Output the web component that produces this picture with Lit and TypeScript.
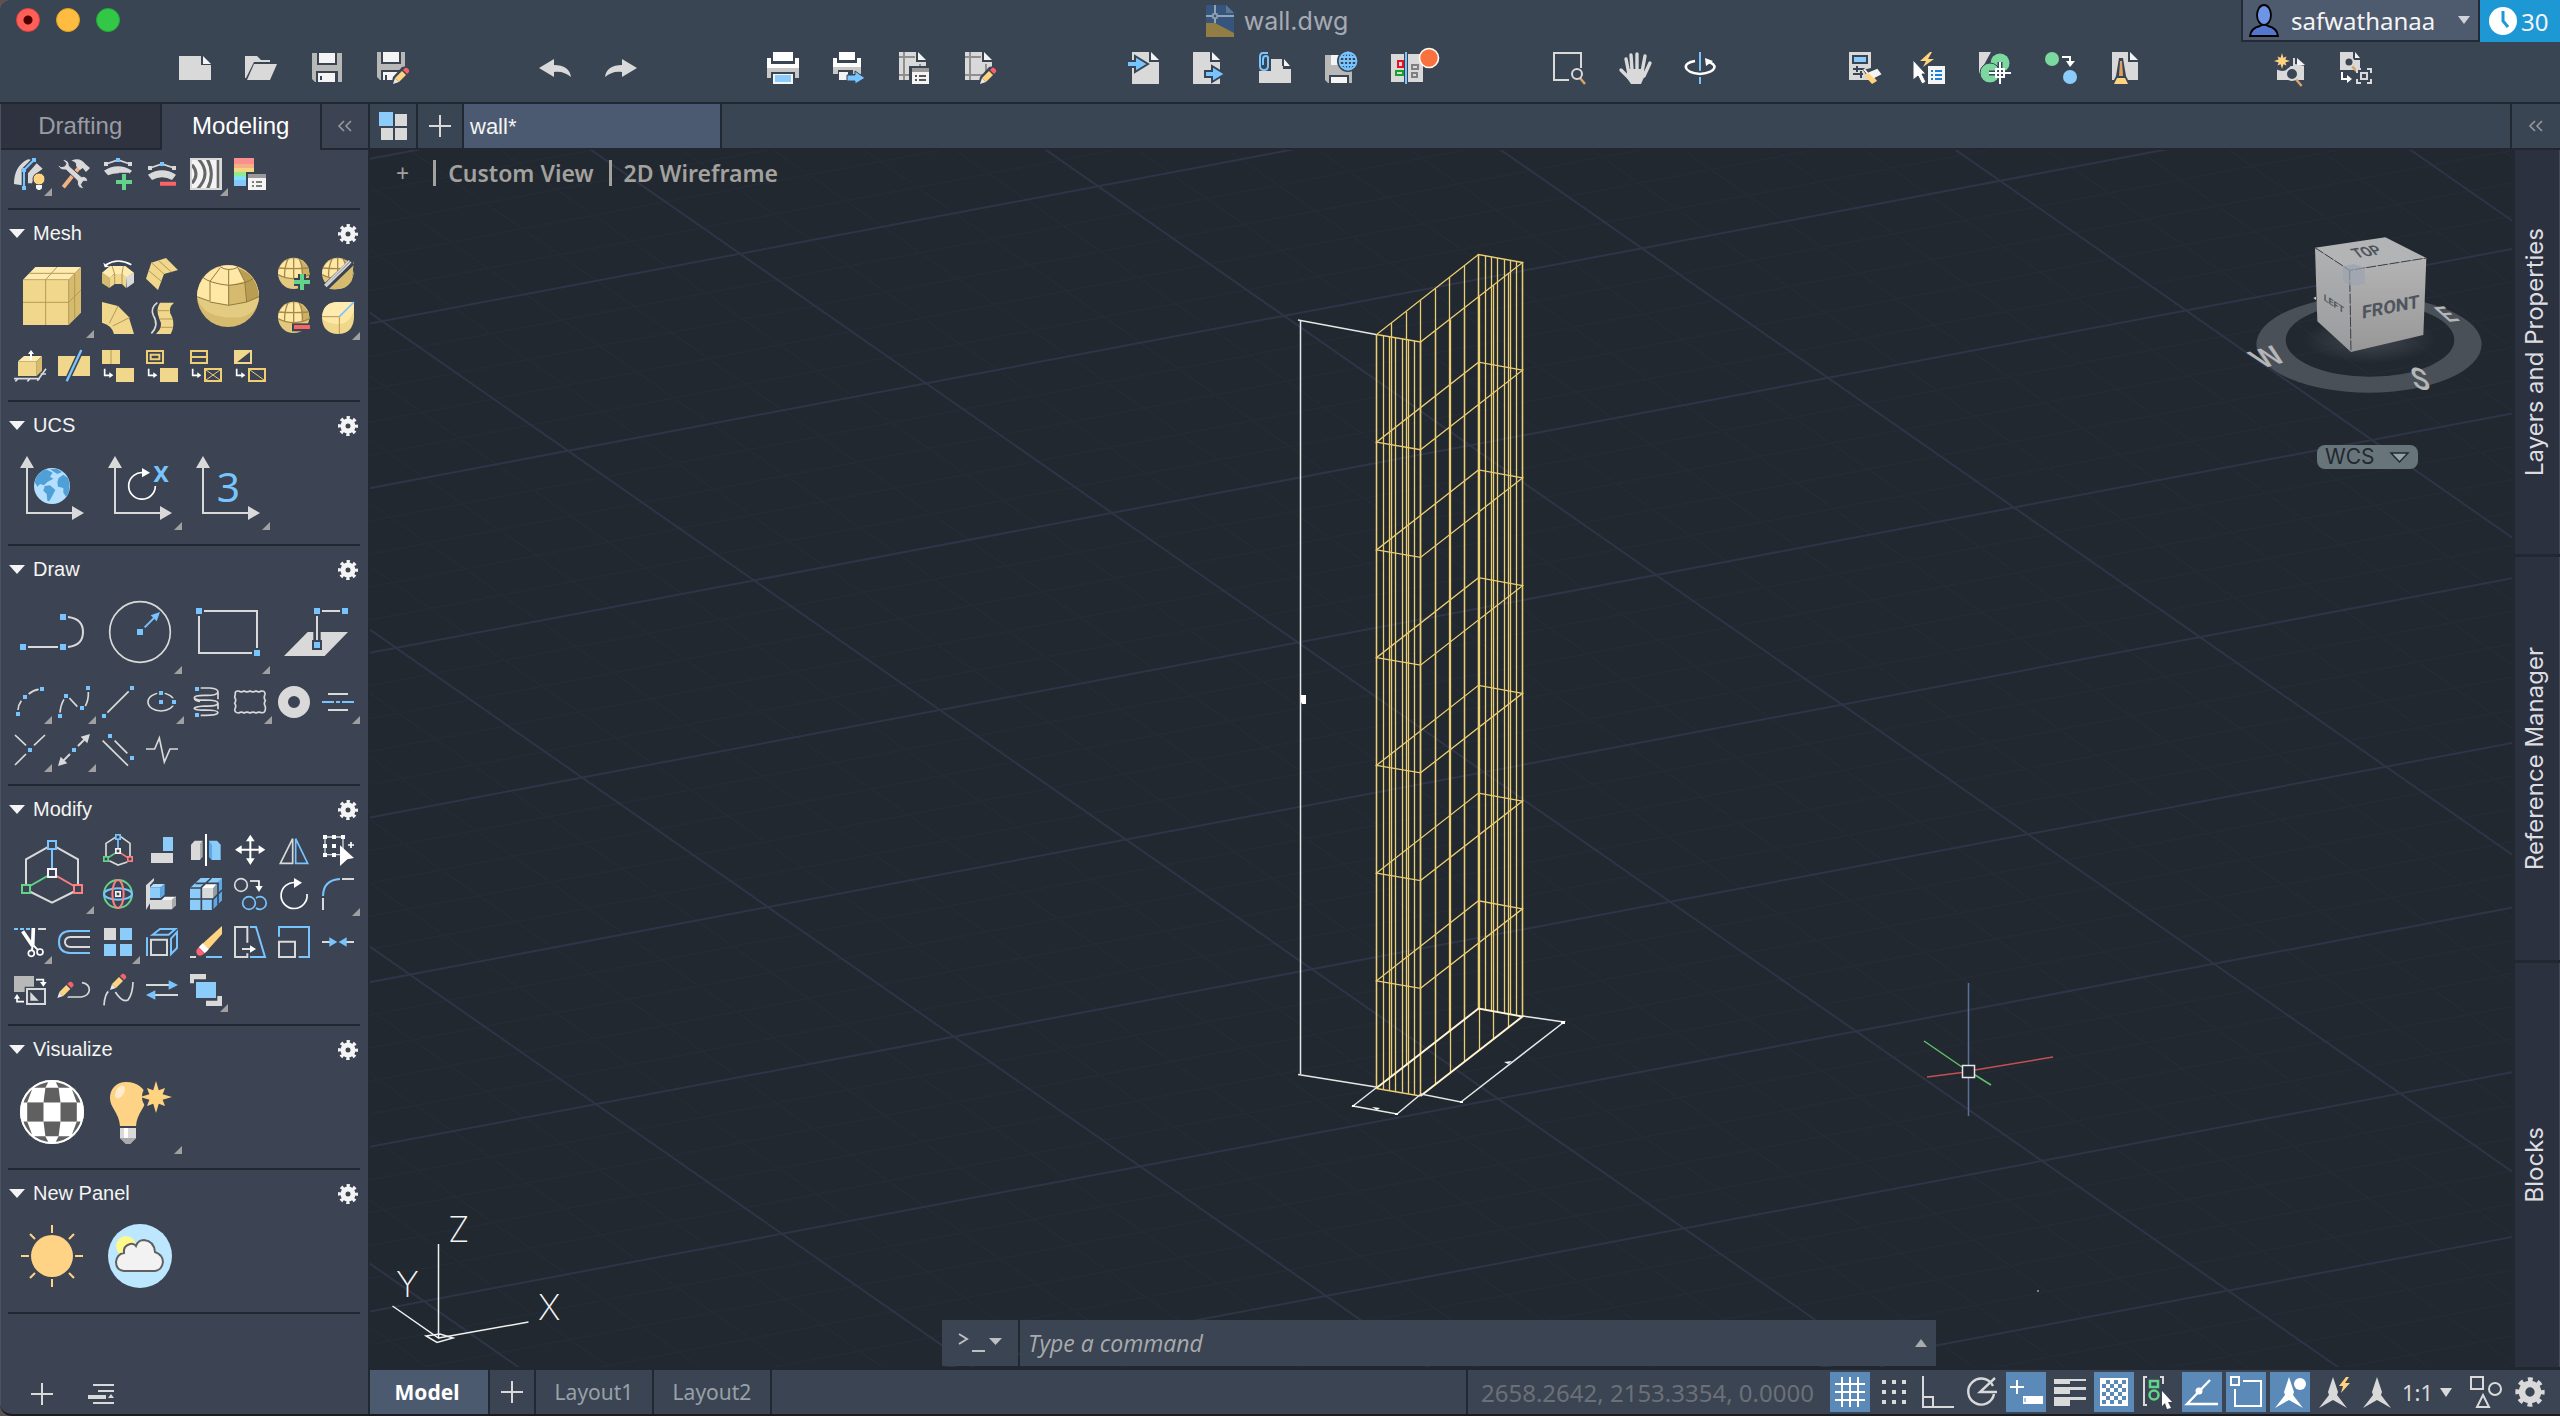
import { LitElement, html, svg, css, nothing, TemplateResult } from "lit";
import { customElement, state } from "lit/decorators.js";

type Glyph = { label: string; box: string; art: TemplateResult; big?: boolean; fly?: boolean };

const glyph = (label: string, box: string, art: TemplateResult, fly = false, big = false): Glyph => ({ label, box, art, big, fly });
const draw = (box: string, art: TemplateResult) =>
  html`<svg viewBox=${box} aria-hidden="true" fill="none">${art}</svg>`;

/* ---------- shared drawing parts ---------- */
const dot = (x: number, y: number, s = 12, c = "#78c4ff") =>
  svg`<rect x=${x - s / 2} y=${y - s / 2} width=${s} height=${s} fill=${c} />`;
const box = (x: number, y: number, s: number, c: string, w: number) =>
  svg`<rect x=${x - s / 2} y=${y - s / 2} width=${s} height=${s} stroke=${c} stroke-width=${w} fill="#3c4453" />`;
const GEAR = svg`<circle cx="12" cy="12" r="8" stroke="currentColor" stroke-width="4" stroke-dasharray="3.14 3.14" stroke-dashoffset="1.57" /><circle cx="12" cy="12" r="5" stroke="currentColor" stroke-width="5" />`;
const PLUS = svg`<path d="M11 0V22M0 11H22" stroke="#d9d9d9" stroke-width="2" />`;
const pencil = (x: number, y: number, s: number) => svg`<g transform="translate(${x} ${y}) scale(${s})">
  <path d="M-2 18L0 9L9-1L14-2L18 3L17 8L8 17Z" fill="#3a4554" />
  <path d="M0 16L2 10L6 14Z" fill="#e8e8e8" /><path d="M2 10L9 3L13 7L6 14Z" fill="#ffd37f" />
  <path d="M10 2L12 0C14-1 17 2 16 4L14 6Z" fill="#f8606a" /></g>`;
const star = (cx: number, cy: number, r: number) => {
  const p: string[] = [];
  for (let i = 0; i < 16; i++) {
    const q = i % 2 ? r * 0.45 : i % 4 ? r * 0.8 : r;
    const a = (i * Math.PI) / 8;
    p.push(`${cx + q * Math.sin(a)},${cy - q * Math.cos(a)}`);
  }
  return svg`<polygon points=${p.join(" ")} fill="#ffd37f" />`;
};
const lens = (cx: number, cy: number, r: number) => svg`
  <path d="M${cx + r * 0.6} ${cy + r * 0.8}L${cx + r * 1.6} ${cy + r * 2}" stroke="#d9a368" stroke-width="2.5" />
  <circle cx=${cx} cy=${cy} r=${r} fill="#3a4554" stroke="#d9d9d9" stroke-width="2" />`;

/* ---------- main toolbar ---------- */
const B32 = "0 0 32 32";
const floppy = svg`<path d="M1 1H31V30H4L1 27Z" fill="#b8b8b8" /><path d="M6 0H26V13H6ZM5 19H27V31H5Z" fill="#3a4554" />
  <path d="M8 1H24V11H8ZM7 21H24V30H7Z" fill="#f4f4f4" /><path d="M9 24H11V28H9Z" fill="#3a4554" />`;
const smallFloppy = svg`<path d="M0 0H28V28H3L0 25Z" fill="#b8b8b8" /><path d="M4 0H24V12H4ZM4 18H25V28H4Z" fill="#3a4554" />
  <path d="M6 0H22V10H6ZM6 20H22V28H6Z" fill="#f4f4f4" /><path d="M8 23H10V28H8Z" fill="#3a4554" />`;
const page = svg`<path d="M0 0H17V10H27V28H0Z" fill="#d9d9d9" /><path d="M19 0L27 8H19Z" fill="#f4f4f4" />`;
const ruled = svg`${page}<path d="M0 5H16M0 23H26M5 0V28M21 12V28" stroke="#8f8f8f" stroke-width="2" />`;
const undoArrow = "M0 16L15 7V13C25 13 31 17 32 25C27 21 22 19 15 20V25Z";

const TOOLBAR: Glyph[][] = [
  [
    glyph("New", B32, svg`<path d="M0 4H22V13H32V28H0Z" fill="#d9d9d9" /><path d="M24 4L32 12H24Z" fill="#f4f4f4" />`),
    glyph("Open", B32, svg`<path d="M0 4H12L16 8H25V10H9L1 26H0Z" fill="#d9d9d9" /><path d="M9 12H32L25 28H2Z" fill="#d9d9d9" />`),
    glyph("Save", B32, floppy),
    glyph("Save as", B32, svg`${smallFloppy}${pencil(16, 16, 1)}`),
  ],
  [
    glyph("Undo", B32, svg`<path d=${undoArrow} fill="#d9d9d9" />`),
    glyph("Redo", B32, svg`<path d=${undoArrow} fill="#d9d9d9" transform="matrix(-1 0 0 1 32 0)" />`),
  ],
  [
    glyph("Print", B32, svg`<path d="M6 0H26V9H6ZM0 6H4V12H28V6H32V16H0Z" fill="#fff" /><path d="M0 16H32V26H28V20H4V26H0Z" fill="#c8c8c8" /><path d="M6 22H26V32H6Z" fill="#f4f4f4" /><path d="M8 23H24V30H8Z" fill="#8cccfb" />`),
    glyph("Batch publish", B32, svg`<path d="M6 0H22V8H6ZM0 6H4V11H24V6H28V15H0Z" fill="#fff" /><path d="M0 15H28V22H20V18H5V22H0Z" fill="#c8c8c8" /><path d="M6 20H15V28H6Z" fill="#f4f4f4" /><path d="M14 23H22V19L32 26L22 32V29H14Z" fill="#78c4ff" stroke="#3a4554" />`),
    glyph("Page setup", B32, svg`${ruled}<path d="M10 14H32V32H10Z" fill="#3a4554" /><path d="M13 16H30V20H13Z" fill="#9a9a9a" /><path d="M13 20H30V32H13Z" fill="#f4f4f4" /><path d="M16 24H18M20 24H27M16 28H18M20 28H27" stroke="#555" stroke-width="2" />`),
    glyph("Edit page", B32, svg`${ruled}${pencil(15, 16, 1)}`),
  ],
  [
    glyph("Import", B32, svg`<g transform="translate(5 0)"><path d="M0 0H17V10H27V32H0Z" fill="#d9d9d9" /><path d="M19 0L27 8H19Z" fill="#f4f4f4" /></g><path d="M0 9H8V4L21 12L8 20V15H0Z" fill="#78c4ff" stroke="#3a4554" stroke-width="2" />`),
    glyph("Export", B32, svg`<path d="M0 0H17V10H27V32H0Z" fill="#d9d9d9" /><path d="M19 0L27 8H19Z" fill="#f4f4f4" /><path d="M12 19H19V14L32 22L19 30V25H12Z" fill="#78c4ff" stroke="#3a4554" stroke-width="2" />`),
    glyph("Attach", B32, svg`<path d="M0 14H24V17H32V31H0Z" fill="#d9d9d9" /><path d="M12 7H23V17H32V20H12Z" fill="#d9d9d9" /><path d="M25 7L31 14H25Z" fill="#f4f4f4" /><path d="M0 0H12V19H0Z" fill="#3a4554" /><path d="M9 1H4Q1 1 1 5V14Q1 18 5 18Q9 18 9 14V6Q9 4 7 4Q4 4 4 7V13" stroke="#78c4ff" stroke-width="2" />`),
    glyph("Save to web", B32, svg`<path d="M0 3H27V31H3L0 28Z" fill="#b8b8b8" /><path d="M4 23H24V31H4Z" fill="#3a4554" /><path d="M6 3H14V13H6ZM6 25H22V31H6Z" fill="#f4f4f4" /><circle cx="23" cy="9" r="11" fill="#3a4554" /><g stroke="#78c4ff" stroke-width="1.8"><circle cx="23" cy="9" r="8.5" /><ellipse cx="23" cy="9" rx="4" ry="8.5" /><path d="M14 9H32M23 0V18M16 5H30M16 13H30" /></g>`),
    glyph("Compare", B32, svg`<path d="M0 2H13V30H0ZM17 2H32V30H17Z" fill="#d9d9d9" /><path d="M14 0H16V32H14Z" fill="#78c4ff" /><path d="M7 9H12V15H7Z" stroke="#e81123" stroke-width="2" /><path d="M5 19H12V23H5Z" stroke="#16a02c" stroke-width="2" /><path d="M21 13H27V17H21ZM21 21H26V25H21Z" stroke="#808080" stroke-width="2" /><circle cx="38" cy="6" r="9.5" fill="#f9713c" stroke="#fff" stroke-width="1.6" />`),
  ],
  [
    glyph("Zoom window", B32, svg`<path d="M16 28H1V1H28V16" stroke="#d9d9d9" stroke-width="2" />${lens(24, 22, 5)}`),
    glyph("Pan", B32, svg`<path d="M10 22L7 7M13 18L12 3M18 18V2M23 20L26 4M25 24L31 11M11 27L2 18" stroke="#d9d9d9" stroke-width="3.4" stroke-linecap="round" /><path d="M8 17H25L26 23L22 32H12L8 26Z" fill="#d9d9d9" />`),
    glyph("Orbit", B32, svg`<path d="M15 0V32" stroke="#78c4ff" stroke-width="2" /><path d="M10 9C-3 11-3 20 15 22C33 20 33 12 22 9.5" stroke="#3a4554" stroke-width="6" /><path d="M10 9C-3 11-3 20 15 22C33 20 33 12 22 9.5" stroke="#fff" stroke-width="2.5" /><path d="M20 6L28 9L21 14Z" fill="#fff" />`),
  ],
  [
    glyph("Properties", B32, svg`<path d="M2 0H24V28H2Z" fill="#d9d9d9" /><path d="M6 4H20V11H6Z" fill="#8cccfb" stroke="#3a4554" stroke-width="2" /><path d="M6 17H18M6 22H16M10 14V20M14 19V26" stroke="#3a4554" stroke-width="2" /><path d="M16 18L26 33L33 28L24 16Z" fill="#3a4554" /><path d="M17 23L23 20L30 29L25 32Z" fill="#ffd37f" /><path d="M17 17L21 22M23 21L30 18L33 22L27 25Z" fill="#f4f4f4" stroke="#f4f4f4" stroke-width="2" />`),
    glyph("Quick select", B32, svg`<path d="M17 0L7 9H13L10 15L21 7H15L19 0Z" fill="#ffd37f" /><path d="M15 14H32V32H15Z" fill="#f4f4f4" /><path d="M18 19H20M22 19H29M18 23H20M22 23H29M18 27H20M22 27H29" stroke="#1c7fd6" stroke-width="2" /><path d="M0 8L13 22H9L13 30L9 32L5 24L0 28Z" fill="#fff" stroke="#3a4554" />`),
    glyph("Object snap", B32, svg`<path d="M0 0H12L0 22Z" fill="#d9d9d9" /><circle cx="21" cy="11" r="9.5" fill="#7dd8a0" /><circle cx="11" cy="21" r="10" fill="#7dd8a0" stroke="#3a4554" /><path d="M10 21H32M21 10V32" stroke="#3a4554" stroke-width="5" /><path d="M10 21H32M21 10V32M17 17H25V25H17Z" stroke="#fff" stroke-width="2" />`),
    glyph("Match", B32, svg`<circle cx="7" cy="7" r="7" fill="#7dd8a0" /><circle cx="25" cy="25" r="7" fill="#8cccfb" /><path d="M17 5H25V10" stroke="#fff" stroke-width="2" /><path d="M21 9H30L25 15Z" fill="#fff" />`),
    glyph("Purge", B32, svg`<path d="M1 0H17V10H27V28H1Z" fill="#d9d9d9" /><path d="M19 0L27 8H19Z" fill="#f4f4f4" /><path d="M8 6H12L15 24L19 32H1L5 24Z" fill="#3a4554" /><path d="M9 9H11L12 24H8Z" fill="#e0a060" /><path d="M6 26H14L17 32H3Z" fill="#ffd37f" />`),
  ],
  [
    glyph("Find new", B32, svg`<path d="M4 28V14H20V6H31V28Z" fill="#d9d9d9" /><path d="M22 12V2H32V14Z" fill="#3a4554" /><path d="M24 6L32 13H24Z" fill="#f4f4f4" /><circle cx="9" cy="9" r="10" fill="#3a4554" />${star(9, 9, 8)}${lens(19, 22, 6)}`),
    glyph("Find and replace", B32, svg`<path d="M1 0H14V8H21V18H1Z" fill="#d9d9d9" /><path d="M16 0L21 6H16Z" fill="#f4f4f4" />${lens(10, 10, 4.5)}<path d="M3 20V27H9" stroke="#fff" stroke-width="2" /><path d="M8 23L13 27L8 31Z" fill="#fff" /><path d="M18 21V17H22M28 17H32V21M32 27V31H28M22 31H18V27" stroke="#d9d9d9" stroke-width="2" /><path d="M22 21H28V27H22Z" stroke="#d9d9d9" stroke-width="2" />`),
  ],
];

/* ---------- tool sets ---------- */
const meshMini = (x: number, y: number) => svg`<circle cx=${x + 47} cy=${y + 46} r="47" fill="#e3c97f" />
  <path d="M${x} ${y + 50}A47 47 0 0 1 ${x + 94} ${y + 50}Q${x + 47} ${y + 72} ${x} ${y + 50}Z" fill="#ffe7a5" />
  <path d="M${x + 68} ${y + 6}Q${x + 96} ${y + 24} ${x + 94} ${y + 50}Q${x + 85} ${y + 58} ${x + 72} ${y + 60}Z" fill="#cdb064" />
  <path d="M${x + 2} ${y + 30}Q${x + 47} ${y + 34} ${x + 92} ${y + 30}M${x + 47} ${y}V${y + 64}M${x + 30} ${y + 3}Q${x + 18} ${y + 28} ${x + 20} ${y + 60}M${x + 64} ${y + 3}Q${x + 76} ${y + 28} ${x + 73} ${y + 60}M${x} ${y + 50}Q${x + 47} ${y + 74} ${x + 94} ${y + 50}" stroke="#a58a48" stroke-width="4" />`;
const replaceArrow = (x: number) => svg`<path d="M${x + 8} 686V706H${x + 24}" stroke="#fff" stroke-width="5" /><path d="M${x + 22} 697L${x + 34} 706L${x + 22} 714Z" fill="#fff" />`;
const axes = (x: number) => svg`<path d="M${x + 39} 970V1119H${x + 180}" stroke="#d9d9d9" stroke-width="6" />
  <path d="M${x + 18} 984L${x + 39} 948L${x + 60} 984ZM${x + 174} 1098L${x + 210} 1119L${x + 174} 1140Z" fill="#d9d9d9" />`;

const SURFACE: Glyph[][] = [[
  glyph("Show vertices", "42 54 96 96", svg`<path d="M42 132Q42 78 84 58L98 60L66 98V136Z" fill="#d9d9d9" /><path d="M84 100L110 70L128 86L104 104L96 130H84Z" fill="#d9d9d9" /><path d="M102 60L72 90V144" stroke="#3c4453" stroke-width="14" /><path d="M102 60L72 90V144" stroke="#78c4ff" stroke-width="6" />${dot(102, 60)}${dot(72, 90)}${dot(72, 144)}<circle cx="117" cy="117" r="18" fill="#ffd37f" stroke="#3c4453" stroke-width="3" /><path d="M108 135H126V145L120 150H114L108 145Z" fill="#f4f4f4" />`, true),
  glyph("Surface tools", "174 54 96 96", svg`<path d="M238 82L190 142" stroke="#f3b183" stroke-width="12" /><path d="M214 62Q240 50 256 72L270 84L258 96L248 84L240 90L228 78Q232 66 214 62Z" fill="#d9d9d9" /><path d="M186 58L198 70L194 78L182 80L174 72Q176 92 198 90L232 122Q230 146 252 146L244 134L250 124L264 124Q260 106 244 110L208 78Q208 58 186 58Z" fill="#d9d9d9" stroke="#3c4453" stroke-width="3" />`),
  glyph("Add vertex", "306 54 96 96", svg`<path d="M318 72L354 60L390 72" stroke="#d9d9d9" stroke-width="5" />${dot(318, 72, 12, "#d9d9d9")}${dot(390, 72, 12, "#d9d9d9")}${dot(354, 60)}<path d="M312 92Q354 66 396 92L384 106Q354 94 324 106Z" fill="#d9d9d9" /><path d="M356 98H388V110H360Z" fill="#3c4453" /><path d="M348 126H396M372 102V150" stroke="#62d48a" stroke-width="12" />`),
  glyph("Remove vertex", "438 54 96 96", svg`<path d="M450 84L486 72L522 84" stroke="#d9d9d9" stroke-width="5" />${dot(450, 84, 12, "#d9d9d9")}${dot(522, 84, 12, "#d9d9d9")}${dot(486, 72)}<path d="M444 104Q486 78 528 104L516 120Q486 104 456 120Z" fill="#d9d9d9" /><path d="M480 131H528" stroke="#fb6464" stroke-width="12" />`),
  glyph("Zebra analysis", "570 54 96 96", svg`<path d="M571 55H665V149H571Z" fill="#f4f4f4" /><path d="M576 74Q600 102 576 130M596 58Q636 102 592 148M622 58Q646 102 622 148" stroke="#666" stroke-width="9" /><path d="M654 58V148" stroke="#666" stroke-width="8" /><path d="M573 57H663V147H573Z" stroke="#d9d9d9" stroke-width="6" />`, true),
  glyph("Analysis options", "702 54 96 96", svg`<path d="M702 54H762V72H702Z" fill="#fb8f8f" /><path d="M702 72H762V84H702Z" fill="#f5b183" /><path d="M702 84H762V96H702Z" fill="#f3d684" /><path d="M702 96H738V108H702Z" fill="#90ea90" /><path d="M702 108H738V120H702Z" fill="#84e0f4" /><path d="M702 120H738V138H702Z" fill="#84c8fb" /><path d="M744 102H798V114H744Z" fill="#999" /><path d="M744 114H798V150H744Z" fill="#f4f4f4" /><path d="M756 126H762M768 126H786M756 138H762M768 138H786" stroke="#555" stroke-width="5" />`),
]];

const MESH: Glyph[][] = [
  [
    glyph("Mesh box", "42 354 228 228", svg`<path d="M69 419H206V555H69Z" fill="#f0d78c" /><path d="M69 419L106 381H243L206 419Z" fill="#ffeab0" /><path d="M206 419L243 381V518L206 555Z" fill="#d6bb6e" /><path d="M69 487H206L243 450M137 555V419L171 381M88 400H224V534" stroke="#b59a55" stroke-width="3" /><path d="M69 419H206V555" stroke="#b59a55" stroke-width="2" />`, true, true),
    glyph("Revolved mesh", "306 354 96 96", svg`<path d="M318 374Q354 352 394 374" stroke="#fff" stroke-width="5" /><path d="M310 368L314 382L328 380Z" fill="#fff" /><path d="M306 398L330 378H376L402 398L378 414L366 402H342L328 414Z" fill="#ffeab0" /><path d="M306 398L328 412V444L306 430Z" fill="#d6bb6e" /><path d="M328 412L344 402H366L378 412V444L366 432H344L328 444Z" fill="#f0d78c" /><path d="M378 412L402 398V428L380 444Z" fill="#d9d9d9" /><path d="M336 378L344 402V432M370 378L366 402V432" stroke="#b59a55" stroke-width="3" />`),
    glyph("Edge mesh", "438 354 96 96", svg`<path d="M454 368L498 354L534 390L492 402L474 450L438 416Z" fill="#f0d78c" /><path d="M476 362L514 396M446 392L484 424M454 368L492 402" stroke="#b59a55" stroke-width="3" />`),
    glyph("Mesh sphere", "570 354 228 228", svg`<circle cx="684" cy="468" r="93" fill="#d6bb6e" /><path d="M591 472Q640 494 686 494Q740 494 777 472Q774 520 720 532Q610 540 591 472Z" fill="#e3cb82" /><path d="M591 470A93 93 0 0 1 777 470L740 486L686 496L630 486Z" fill="#ffe7a5" /><path d="M714 384Q770 400 777 470L740 486L734 424Z" fill="#b99d50" /><path d="M686 436L734 424L740 486L686 496Z" fill="#d6bb6e" /><path d="M660 380Q684 372 712 380Q690 392 660 380Z" fill="#ffeab0" /><path d="M608 412Q630 430 686 436Q740 432 762 414M686 388V496M660 384L630 424V484L591 470M714 384L734 424L740 486L777 470M630 486L686 496L740 486M660 380Q684 396 714 382" stroke="#8f7a45" stroke-width="3" />`, false, true),
    glyph("Smooth more", "834 354 96 96", svg`${meshMini(834, 354)}<path d="M882 426H930M906 402V450" stroke="#3c4453" stroke-width="24" /><path d="M882 426H930M906 402V450" stroke="#62d48a" stroke-width="12" />`),
    glyph("Split mesh face", "966 354 96 96", svg`${meshMini(966, 354)}<path d="M1062 366L986 446Q1030 456 1054 424Z" fill="#d6bb6e" /><path d="M970 440L1052 362M980 446L1060 370" stroke="#3c4453" stroke-width="10" /><path d="M974 436L1048 362M978 440L1053 366" stroke="#d9d9d9" stroke-width="5" />`),
    glyph("Tabulated mesh", "306 486 96 96", svg`<path d="M306 486L354 498L386 530L402 582H342Q336 556 306 548Z" fill="#f0d78c" /><path d="M354 498L328 550M390 532L338 558" stroke="#b59a55" stroke-width="3" />`),
    glyph("Ruled mesh", "438 486 96 96", svg`<path d="M472 488Q450 504 460 526Q478 556 454 580" stroke="#d9d9d9" stroke-width="5" /><path d="M480 488H522Q500 506 516 530Q526 556 512 582H468Q492 560 478 536Q466 508 480 488Z" fill="#f0d78c" /><path d="M472 512H508M480 537H518M484 562H518" stroke="#b59a55" stroke-width="3" />`),
    glyph("Smooth less", "834 486 96 96", svg`${meshMini(834, 486)}<path d="M876 550H932V574H876Z" fill="#3c4453" /><path d="M882 561H930" stroke="#fb6464" stroke-width="12" />`),
    glyph("Crease", "966 486 96 96", svg`<path d="M966 530Q970 486 1014 486H1062V534Q1058 582 1014 582Q966 580 966 530Z" fill="#f0d78c" /><path d="M966 530Q970 486 1014 486H1062L1018 530Z" fill="#ffeab0" /><path d="M966 530H1018L1062 486V510Q1050 552 1014 552Q966 548 966 530Z" fill="#ffe7a5" /><path d="M966 530H1018V582" stroke="#b59a55" stroke-width="3" /><path d="M1018 530L1062 486" stroke="#78c4ff" stroke-width="5" />`, true),
  ],
  [
    glyph("Extrude face", "42 630 96 96", svg`<path d="M42 716H120M46 724L56 714M82 724L92 714M112 722L138 686M122 702H138" stroke="#d9d9d9" stroke-width="5" /><path d="M54 664H110V708H54Z" fill="#f0d78c" /><path d="M54 664L72 648H126L110 664Z" fill="#ffeab0" /><path d="M110 664L126 648V692L110 708Z" fill="#d6bb6e" /><path d="M93 660V640" stroke="#fff" stroke-width="6" /><path d="M84 642L93 630L102 642Z" fill="#fff" />`),
    glyph("Split face", "174 630 96 96", svg`<path d="M174 648H270V708H174Z" fill="#f0d78c" /><path d="M244 630L200 724" stroke="#3c4453" stroke-width="16" /><path d="M244 630L200 724" stroke="#78c4ff" stroke-width="7" />`),
    glyph("Merge face", "306 630 96 96", svg`<path d="M306 630H360V672H306ZM348 684H402V726H348Z" fill="#f0d78c" /><path d="M333 630V672" stroke="#b59a55" stroke-width="3" />${replaceArrow(306)}`),
    glyph("Close hole", "438 630 96 96", svg`<path d="M441 633H489V669H441Z M452 644H478V658H452Z" stroke="#f0cf74" stroke-width="6" /><path d="M480 684H534V726H480Z" fill="#f0d78c" />${replaceArrow(438)}`),
    glyph("Collapse face", "570 630 96 96", svg`<path d="M573 633H621V669H573ZM573 651H621M615 687H663V723H615Z" stroke="#f0cf74" stroke-width="6" /><path d="M618 690L660 720M660 690L618 720" stroke="#f0cf74" stroke-width="3" />${replaceArrow(570)}`),
    glyph("Spin edge", "702 630 96 96", svg`<path d="M702 630H756V672H702Z" fill="#f0d78c" /><path d="M750 636V666H712Z" fill="#3c4453" /><path d="M747 687H795V723H747Z" stroke="#f0cf74" stroke-width="6" /><path d="M750 690L792 720" stroke="#f0cf74" stroke-width="3" />${replaceArrow(702)}`),
  ],
];

const UCS: Glyph[][] = [[
  glyph("World UCS", "42 930 228 228", svg`${axes(42)}<circle cx="156" cy="1038" r="54" fill="#b4dfff" /><path d="M104 1026Q112 996 138 988L158 998L150 1010L160 1016L142 1026L132 1036L120 1032L112 1040Z" fill="#4fa0d6" /><path d="M134 1038L150 1036L166 1050L158 1066L148 1084L142 1082L140 1062L130 1052Z" fill="#4fa0d6" /><path d="M176 1014L190 1004L204 1014Q212 1036 206 1058L198 1070L190 1058V1044L174 1040L172 1026Z" fill="#4fa0d6" /><path d="M150 988L170 986L186 996L172 1002Z" fill="#4fa0d6" />`, false, true),
  glyph("Rotate about X", "306 930 228 228", svg`${axes(306)}<path d="M432 998A40 40 0 1 0 466 1038" stroke="#fff" stroke-width="5" /><path d="M426 984L450 998L426 1012Z" fill="#fff" /><text x="460" y="1026" class="glyph-x">x</text>`, true, true),
  glyph("3-point UCS", "570 930 228 228", svg`${axes(570)}<text x="650" y="1086" class="glyph-3">3</text>`, true, true),
]];

const DRAW: Glyph[][] = [
  [
    glyph("Polyline", "42 162 228 228", svg`<path d="M84 321H174M204 321Q249 316 249 276Q249 236 204 231" stroke="#d9d9d9" stroke-width="6" />${dot(69, 321, 18)}${dot(189, 321, 18)}${dot(189, 231, 18)}`, false, true),
    glyph("Circle", "306 162 228 228", svg`<circle cx="420" cy="276" r="91" stroke="#d9d9d9" stroke-width="5" />${dot(420, 276, 18)}<path d="M434 262L466 230" stroke="#78c4ff" stroke-width="6" /><path d="M480 216L452 226L470 244Z" fill="#78c4ff" />`, true, true),
    glyph("Rectangle", "570 162 228 228", svg`<path d="M612 213H771V324M756 339H597V228" stroke="#d9d9d9" stroke-width="6" />${dot(597, 213, 18)}${dot(771, 339, 18)}`, true, true),
    glyph("Presspull", "834 162 228 228", svg`<path d="M923 276H1044L974 348H852Z" fill="#d9d9d9" /><path d="M940 276H962V326H940Z" fill="#3c4453" /><path d="M951 228V300M966 213H1020" stroke="#d9d9d9" stroke-width="6" />${dot(951, 315, 30, "#3c4453")}${dot(951, 315, 18)}${dot(951, 213, 18)}${dot(1035, 213, 18)}`, false, true),
  ],
  [
    glyph("Arc", "42 438 96 96", svg`<path d="M54 510Q54 496 64 482M86 462Q100 450 116 448" stroke="#d9d9d9" stroke-width="5" />${dot(54, 522)}${dot(75, 471)}${dot(126, 447)}`, true),
    glyph("Spline", "174 438 96 96", svg`<path d="M180 518Q182 494 192 478M208 474L232 500M256 498Q266 480 265 456" stroke="#d9d9d9" stroke-width="5" />${dot(180, 528)}${dot(198, 468)}${dot(246, 504)}${dot(264, 444)}`, true),
    glyph("Line", "306 438 96 96", svg`<path d="M322 518L386 454" stroke="#d9d9d9" stroke-width="5" />${dot(312, 528)}${dot(396, 444)}`),
    glyph("Ellipse", "438 438 96 96", svg`<ellipse cx="483" cy="486" rx="39" ry="27" stroke="#d9d9d9" stroke-width="5" />${dot(483, 459, 22, "#3c4453")}${dot(522, 486, 22, "#3c4453")}${dot(483, 486)}${dot(483, 459)}${dot(522, 486)}`, true),
    glyph("Helix", "570 438 96 96", svg`<path d="M602 444H630Q654 446 654 456Q650 468 612 466Q582 466 583 474Q588 482 618 480Q654 480 654 490Q650 500 612 498Q582 500 583 506Q590 512 618 510Q654 510 654 518Q650 528 602 526M654 456V478M654 490V508M583 474Q584 484 600 484" stroke="#d9d9d9" stroke-width="5" />${dot(591, 447)}${dot(591, 525)}`),
    glyph("Revision cloud", "702 438 96 96", svg`<path d="M706 462Q704 452 716 453Q724 458 732 453Q741 458 750 453Q759 458 768 453Q777 458 784 453Q796 452 795 464Q790 472 796 482Q790 490 796 500Q798 520 784 518Q777 514 768 519Q759 514 750 519Q741 514 732 519Q724 514 716 519Q702 518 705 506Q710 498 704 490Q710 480 704 472Z" stroke="#d9d9d9" stroke-width="5" />`, true),
    glyph("Donut", "834 438 96 96", svg`<circle cx="882" cy="486" r="33" stroke="#d9d9d9" stroke-width="30" />`),
    glyph("Centerline", "966 438 96 96", svg`<path d="M984 462H1044M984 510H1044" stroke="#d9d9d9" stroke-width="6" /><path d="M966 486H1002M1008 486H1020M1026 486H1062" stroke="#78c4ff" stroke-width="6" />`, true),
  ],
  [
    glyph("Point", "42 582 96 96", svg`<path d="M45 585L78 616M135 585L102 616M78 642L45 675" stroke="#d9d9d9" stroke-width="5" />${dot(90, 630)}`, true),
    glyph("Ray", "174 582 96 96", svg`<path d="M234 618L256 596M210 642L188 664" stroke="#d9d9d9" stroke-width="6" /><path d="M270 582L242 590L262 610ZM174 678L202 670L182 650Z" fill="#d9d9d9" />${dot(222, 630)}`, true),
    glyph("Double line", "306 582 96 96", svg`<path d="M308 602L384 677M344 602L382 640" stroke="#d9d9d9" stroke-width="5" />${dot(330, 588)}${dot(396, 654)}`),
    glyph("Breakline", "438 582 96 96", svg`<path d="M438 627H464L478 594L493 666L510 627H534" stroke="#d9d9d9" stroke-width="5" />`),
  ],
];

const HEX_SMALL = svg`<path d="M362 890L390 910V948M382 966L354 975L328 962M318 948V910L346 892" stroke="#d9d9d9" stroke-width="5" /><path d="M354 898V926" stroke="#78c4ff" stroke-width="5" /><path d="M348 938L326 952" stroke="#62d48a" stroke-width="5" /><path d="M360 938L382 952" stroke="#fb8080" stroke-width="5" />${box(354, 891, 13, "#78c4ff", 5)}${box(354, 933, 13, "#f4f4f4", 5)}${box(318, 957, 13, "#62d48a", 5)}${box(390, 957, 13, "#fb8080", 5)}`;
const MODIFY: Glyph[][] = [
  [
    glyph("3D gizmo", "42 882 228 228", svg`<path d="M170 922L234 958V1034M220 1056L156 1088L92 1056M78 1034V958L142 922" stroke="#d9d9d9" stroke-width="6" /><path d="M156 928V986" stroke="#78c4ff" stroke-width="6" /><path d="M142 1008L90 1038" stroke="#62d48a" stroke-width="6" /><path d="M170 1008L222 1038" stroke="#fb8080" stroke-width="6" />${box(156, 915, 24, "#78c4ff", 6)}${box(156, 999, 24, "#f4f4f4", 6)}${box(78, 1047, 24, "#62d48a", 6)}${box(234, 1047, 24, "#fb8080", 6)}`, true, true),
    glyph("3D move", "306 882 96 96", HEX_SMALL),
    glyph("Align", "438 882 96 96", svg`<path d="M489 891H519V933H489Z" fill="#8cccfb" /><path d="M453 939H519V969H453Z" fill="#d9d9d9" />`),
    glyph("3D mirror", "570 882 96 96", svg`<path d="M573 914L584 902H608L600 914V960H573Z" fill="#d9d9d9" /><path d="M600 914L608 902V950L600 960Z" fill="#aaa" /><path d="M627 902H651L662 914V960H636L627 950Z" fill="#8cccfb" /><path d="M627 902L636 914V960L627 950Z" fill="#5aa8e6" /><path d="M618 882V978" stroke="#fff" stroke-width="6" />`),
    glyph("Move", "702 882 96 96", svg`<path d="M751 898V960M720 929H782" stroke="#fff" stroke-width="6" /><path d="M738 904L751 884L764 904ZM738 955L751 975L764 955ZM725 916L705 929L725 942ZM776 916L796 929L776 942Z" fill="#fff" />`),
    glyph("Mirror", "834 882 96 96", svg`<path d="M841 970L878 896V970Z" stroke="#d9d9d9" stroke-width="5" /><path d="M887 896V970H923Z" stroke="#78c4ff" stroke-width="5" />`),
    glyph("Select grips", "966 882 96 96", svg`<path d="M975 891H1029V944H975Z" stroke="#d9d9d9" stroke-width="4" />${[[975, 891], [1002, 891], [1029, 891], [975, 918], [1002, 918], [975, 945], [1002, 945]].map(([a, b]) => dot(a, b, 12, "#fff"))}<path d="M1020 916L1062 954L1042 958L1020 978Z" fill="#fff" /><path d="M1044 915H1062M1053 906V924" stroke="#fff" stroke-width="5" />`),
    glyph("3D rotate", "306 1014 96 96", svg`<circle cx="354" cy="1062" r="42" stroke="#62d48a" stroke-width="6" /><ellipse cx="354" cy="1062" rx="42" ry="17" stroke="#78c4ff" stroke-width="6" /><ellipse cx="354" cy="1062" rx="17" ry="42" stroke="#fb8080" stroke-width="6" />${box(354, 1062, 13, "#f4f4f4", 5)}`),
    glyph("3D align", "438 1014 96 96", svg`<path d="M438 1036L462 1014V1022L450 1036V1090L438 1110Z" fill="#d9d9d9" /><path d="M450 1080H516V1108H450Z" fill="#d9d9d9" /><path d="M494 1070H528L516 1080H484Z" fill="#f4f4f4" /><path d="M516 1080L528 1068V1096L516 1108Z" fill="#aaa" /><path d="M450 1042H482V1074H450Z" fill="#8cccfb" /><path d="M450 1042L460 1032H494L482 1042Z" fill="#b4dfff" /><path d="M482 1042L494 1032V1064L482 1074Z" fill="#5aa8e6" />`),
    glyph("3D array", "570 1014 96 96", svg`<path d="M570 1044L602 1014H666V1080L636 1110H570Z" fill="#8cccfb" /><path d="M636 1044L666 1014V1080L636 1110Z" fill="#5aa8e6" /><path d="M606 1044L616 1032H650L640 1044Z" fill="#fff" /><path d="M606 1044H640V1074H606Z" fill="#d9d9d9" /><path d="M640 1044L650 1032V1062L640 1074Z" fill="#999" /><path d="M570 1044H606M570 1077H640L666 1050M604 1110V1042L634 1014M586 1030H654V1094M638 1110V1076" stroke="#3c4453" stroke-width="5" />`),
    glyph("Copy", "702 1014 96 96", svg`<circle cx="723" cy="1035" r="19" stroke="#d9d9d9" stroke-width="5" /><circle cx="747" cy="1089" r="19" stroke="#78c4ff" stroke-width="5" /><path d="M768 1074A19 19 0 1 1 768 1104" stroke="#78c4ff" stroke-width="5" /><path d="M750 1023H777V1042" stroke="#fff" stroke-width="5" /><path d="M766 1038H788L777 1056Z" fill="#fff" />`),
    glyph("Rotate", "834 1014 96 96", svg`<path d="M888 1028A39 39 0 1 0 921 1062" stroke="#fff" stroke-width="5" /><path d="M882 1014L906 1028L882 1044Z" fill="#fff" />`),
    glyph("Fillet", "966 1014 96 96", svg`<path d="M1026 1017H1062M969 1074V1110" stroke="#d9d9d9" stroke-width="6" /><path d="M969 1068Q970 1020 1020 1017" stroke="#78c4ff" stroke-width="6" />`, true),
  ],
  [
    glyph("Trim", "42 1158 96 96", svg`<path d="M42 1167H54M60 1167H72M78 1167H90" stroke="#78c4ff" stroke-width="6" /><path d="M114 1167H138" stroke="#d9d9d9" stroke-width="6" /><path d="M68 1174L98 1218M100 1164L98 1218" stroke="#fff" stroke-width="11" /><circle cx="94" cy="1240" r="9" stroke="#fff" stroke-width="5" /><circle cx="120" cy="1236" r="9" stroke="#fff" stroke-width="5" /><path d="M98 1214L112 1228M98 1214L96 1230" stroke="#fff" stroke-width="6" />`, true),
    glyph("Offset", "174 1158 96 96", svg`<path d="M270 1173H210Q177 1174 177 1206Q177 1238 210 1239H270" stroke="#78c4ff" stroke-width="6" /><path d="M270 1191H212Q195 1192 195 1206Q195 1220 212 1221H270" stroke="#d9d9d9" stroke-width="6" />`),
    glyph("Array", "306 1158 96 96", svg`${dot(330, 1182, 36, "#d9d9d9")}${dot(378, 1182, 36, "#8cccfb")}${dot(330, 1230, 36, "#8cccfb")}${dot(378, 1230, 36, "#8cccfb")}`, true),
    glyph("Offset faces", "438 1158 96 96", svg`<path d="M453 1199H501V1245H453Z" stroke="#d9d9d9" stroke-width="6" /><path d="M441 1192V1248M458 1184L480 1167H526L506 1184ZM513 1196L531 1176V1224L513 1242Z" stroke="#78c4ff" stroke-width="6" />`),
    glyph("Erase", "570 1158 96 96", svg`<path d="M570 1251H588" stroke="#d9d9d9" stroke-width="6" /><path d="M618 1251H666" stroke="#78c4ff" stroke-width="6" /><path d="M666 1158V1182L618 1236L600 1218Z" fill="#ffd37f" /><path d="M608 1210L626 1228L614 1240L596 1222Z" fill="#fff" /><path d="M596 1222L614 1240Q602 1252 592 1244Q584 1234 596 1222Z" fill="#fb6470" />`),
    glyph("Taper", "702 1158 96 96", svg`<path d="M742 1208V1161H705V1251H742V1240" stroke="#d9d9d9" stroke-width="6" /><path d="M750 1161H768L795 1251H750" stroke="#78c4ff" stroke-width="6" /><path d="M726 1227H754" stroke="#fff" stroke-width="5" /><path d="M750 1216L768 1227L750 1238Z" fill="#fff" />`),
    glyph("Scale", "834 1158 96 96", svg`<path d="M837 1190V1161H927V1251H896" stroke="#78c4ff" stroke-width="6" /><path d="M837 1205H885V1251H837Z" stroke="#d9d9d9" stroke-width="6" />`),
    glyph("Join", "966 1158 96 96", svg`<path d="M966 1206H992M1036 1206H1062" stroke="#d9d9d9" stroke-width="6" /><path d="M988 1192L1012 1206L988 1220ZM1040 1192L1016 1206L1040 1220Z" fill="#78c4ff" />`),
  ],
  [
    glyph("Blend", "42 1302 96 96", svg`<path d="M42 1308H102V1340H74V1356H42Z" fill="#b8b8b8" /><path d="M81 1347H135V1392H81Z" stroke="#d9d9d9" stroke-width="6" /><path d="M91 1356V1382H116Z" fill="#d9d9d9" /><path d="M108 1319H130V1330M51 1374V1385H72" stroke="#fff" stroke-width="5" /><path d="M120 1326H140L130 1340ZM42 1376H60L51 1362Z" fill="#fff" />`),
    glyph("Edit polyline", "174 1302 96 96", svg`<path d="M246 1328Q268 1332 268 1350Q266 1368 244 1371H202" stroke="#d9d9d9" stroke-width="5" />${pencil(172, 1326, 3)}`),
    glyph("Edit spline", "306 1302 96 96", svg`<path d="M312 1396Q314 1360 330 1350M346 1356Q366 1388 384 1380Q398 1362 399 1326" stroke="#d9d9d9" stroke-width="5" />${pencil(330, 1302, 3)}`),
    glyph("Reverse", "438 1302 96 96", svg`<path d="M438 1335H508M464 1365H534" stroke="#d9d9d9" stroke-width="6" /><path d="M506 1321L534 1335L506 1349ZM466 1351L438 1365L466 1379Z" fill="#78c4ff" />`),
    glyph("Draw order", "570 1302 96 96", svg`<path d="M570 1302H618V1318H582V1330H570ZM666 1368V1398H618V1382H652V1368Z" fill="#d9d9d9" /><path d="M588 1326H648V1374H588Z" fill="#8cccfb" />`, true),
  ],
];

/* checkered ball built from curved rows and columns */
const CHECKER = (() => {
  const cells: TemplateResult[] = [];
  const at = (u: number, v: number) => {
    const a = (u * Math.PI) / 2.2, b = (v * Math.PI) / 2.1;
    return `${(38 + 31 * Math.sin(a) * Math.cos(b * 0.8)).toFixed(1)},${(38 + 31 * Math.sin(b)).toFixed(1)}`;
  };
  const s = [-1, -0.68, -0.2, 0.2, 0.68, 1];
  const t = [-1, -0.6, -0.21, 0.21, 0.6, 1];
  for (let i = 0; i < 5; i++)
    for (let j = 0; j < 5; j++)
      if ((i + j) % 2 === 1)
        cells.push(svg`<polygon points="${at(s[i], t[j])} ${at(s[i + 1], t[j])} ${at(s[i + 1], t[j + 1])} ${at(s[i], t[j + 1])}" fill="#606060" />`);
  return cells;
})();
const VISUALIZE: Glyph[][] = [[
  glyph("Materials", "0 0 76 76", svg`<circle cx="38" cy="38" r="32" fill="#fff" />${CHECKER}<circle cx="38" cy="38" r="31" stroke="#fff" stroke-width="2" />`, false, true),
  glyph("Lights", "0 0 76 76", svg`<path d="M24 8C14 8 8 15 8 24C8 34 17 38 18 52H34C35 38 44 34 44 24C44 15 36 8 24 8Z" fill="#ffd385" /><ellipse cx="18" cy="18" rx="4" ry="7" fill="#ffeccc" transform="rotate(30 18 18)" /><path d="M18 54H34V64L28 70H24L18 64Z" fill="#d9d9d9" /><path d="M22 54H26V64H22Z" fill="#fff" /><path d="M18 64H34L28 70H24Z" fill="#aaa" /><circle cx="54" cy="23" r="14" fill="#3c4453" />${star(54, 23, 16)}`, true, true),
]];
const PANEL: Glyph[][] = [[
  glyph("Sun", "0 0 76 76", svg`<circle cx="38" cy="38" r="21" fill="#ffd385" /><path d="M38 7V15M38 61V69M7 38H15M61 38H69M16 16L21 21M60 16L55 21M16 60L21 55M60 60L55 55" stroke="#ffd385" stroke-width="2" />`, false, true),
  glyph("Sky", "0 0 76 76", svg`<circle cx="38" cy="38" r="32" fill="#bce7ff" /><circle cx="24" cy="28" r="10" fill="#fdf98c" /><path d="M22 53Q14 52 14 44Q15 36 22 35Q21 28 28 26Q32 25 34 28Q36 22 42 22Q52 23 53 34Q61 37 61 44Q60 52 53 53Z" fill="#f2f2f2" stroke="#606060" stroke-width="2" />`, false, true),
]];

const SECTIONS: { title: string; rows: Glyph[][] }[] = [
  { title: "Mesh", rows: MESH }, { title: "UCS", rows: UCS }, { title: "Draw", rows: DRAW },
  { title: "Modify", rows: MODIFY }, { title: "Visualize", rows: VISUALIZE }, { title: "New Panel", rows: PANEL },
];

/* ---------- status bar ---------- */
const B40 = "0 0 40 40";
const compass = svg`<path d="M19 5L24 20L23 23L33 36L19 28L5 36L15 23L14 20Z" fill="currentColor" />`;
const checks: TemplateResult[] = [];
for (let i = 0; i < 6; i++) for (let j = 0; j < 6; j++) if ((i + j) % 2 === 0) checks.push(svg`<rect x=${8 + i * 4} y=${8 + j * 4} width="4" height="4" fill="#fff" />`);
const STATUS: { label: string; on?: boolean; art: TemplateResult }[] = [
  { label: "Grid", on: true, art: svg`<path d="M12 5V35M20 5V35M28 5V35M5 12H35M5 20H35M5 28H35" stroke="currentColor" stroke-width="2" />` },
  { label: "Snap", art: svg`${[8, 18, 28].map((x) => [8, 18, 28].map((y) => dot(x + 2, y + 2, 4, "currentColor")))}` },
  { label: "Ortho", art: svg`<path d="M5 4V35H36M5 25H15V35" stroke="currentColor" stroke-width="2" />` },
  { label: "Polar tracking", art: svg`<path d="M31 14A13 13 0 1 0 32 22" stroke="currentColor" stroke-width="2.4" /><path d="M35 20H18L33 6" stroke="currentColor" stroke-width="2.4" />` },
  { label: "Dynamic input", on: true, art: svg`<path d="M4 15H18M11 8V22" stroke="currentColor" stroke-width="2" /><path d="M17 24H37V32H17Z" fill="currentColor" /><path d="M19 26V30" stroke="#5b8ab8" stroke-width="1" />` },
  { label: "Lineweight", art: svg`<path d="M4 7H36V9H20V12H4ZM4 15H36V18H20V22H4ZM4 25H36V28H20V34H4Z" fill="currentColor" />` },
  { label: "Transparency", on: true, art: svg`<path d="M7 7H33V33H7Z" stroke="currentColor" stroke-width="2" />${checks}` },
  { label: "Selection cycling", art: svg`<path d="M9 5H6V33H9M22 5H25V12" stroke="currentColor" stroke-width="2" /><path d="M12 9H20V15H12Z" stroke="#62d48a" stroke-width="2.5" /><circle cx="16" cy="23" r="4.5" stroke="#62d48a" stroke-width="2.5" /><path d="M24 19L34 30H30L33 36L29 37L27 31L24 34Z" fill="#fff" />` },
  { label: "Object snap tracking", on: true, art: svg`<path d="M28 8L5 32H36" stroke="currentColor" stroke-width="2.4" /><circle cx="17" cy="19" r="3.5" fill="currentColor" />` },
  { label: "Object snap", on: true, art: svg`<path d="M5 5H13V13H5ZM17 9H35V34H9V17" stroke="currentColor" stroke-width="2" />` },
  { label: "Annotation visibility", on: true, art: svg`${compass}<circle cx="30" cy="12" r="6" fill="#fff" />` },
  { label: "Annotation autoscale", art: svg`${compass}<path d="M32 5L25 14H29L27 21L36 11H31L35 5Z" fill="#ffd37f" />` },
  { label: "Annotation scale", art: svg`${compass}` },
];

/* ---------- drawing area ---------- */
const GRID = (() => {
  const lines: { w: boolean; t: TemplateResult }[] = [];
  const P = [740, 253.7], U = [358, -67.5], V = [186, 129.6];
  const add = (i: number, a: number[], d: number[]) => {
    const x = P[0] + (i / 5) * a[0], y = P[1] + (i / 5) * a[1];
    const w = i % 5 === 0;
    lines.push({ w, t: svg`<line x1=${x - 12 * d[0]} y1=${y - 12 * d[1]} x2=${x + 12 * d[0]} y2=${y + 12 * d[1]} class=${w ? "major" : "minor"} />` });
  };
  for (let i = -10; i <= 50; i++) add(i, V, U);
  for (let i = -30; i <= 30; i++) add(i, U, V);
  return lines.sort((a, b) => +a.w - +b.w).map((l) => l.t);
})();

const TOWER = (() => {
  const L = [1376.5, 334.5], F = [1420.5, 342], B = [1478.5, 254.5], R = [1522.5, 262.5], H = 754;
  const out: TemplateResult[] = [];
  const faces = [[L, F], [B, R], [L, B], [F, R]];
  for (const [p, q] of faces)
    for (let i = 0; i <= 7; i++) {
      const x = Math.floor(p[0] + ((q[0] - p[0]) * i) / 7 + 0.4) + 0.5;
      const y = p[1] + ((q[1] - p[1]) * i) / 7;
      out.push(svg`<path d="M${x} ${y}V${y + H}" />`);
    }
  for (let k = 0; k < 7; k++) {
    const d = (H * k) / 7;
    out.push(svg`<path d="M${L[0]} ${L[1] + d}L${F[0]} ${F[1] + d}L${R[0]} ${R[1] + d}L${B[0]} ${B[1] + d}Z" />`);
  }
  out.push(svg`<path d="M${L[0]} ${L[1] + H}L${F[0]} ${F[1] + H}" />`);
  return out;
})();

@customElement("app-root")
export class AppRoot extends LitElement {
  @state() private tab = "Modeling";
  @state() private closed = new Set<string>();

  static styles = css`
    :host { display: block; background: #5b5254; color: #f4f4f4; font-family: "Liberation Sans", Arial, sans-serif; }
    * { box-sizing: border-box; }
    button, select, input { font: inherit; color: inherit; background: none; border: 0; padding: 0; margin: 0; appearance: none; outline: none; }
    button, select { cursor: pointer; }
    svg { display: block; overflow: visible; }
    .window { display: flex; flex-direction: column; min-height: calc(100vh - 2px); background: #222831; border-radius: 12px 0 0 12px; border-bottom: 2px solid #191c20; overflow: hidden; }

    .titlebar { display: grid; grid-template-columns: 1fr auto 1fr; height: 42px; background: #3a4554; }
    .lights { display: flex; gap: 16px; padding: 8px 16px; }
    .light { width: 24px; height: 24px; border-radius: 50%; background: #ff5f57; border: 1px solid #e2463f; }
    .light.min { background: #febc40; border-color: #dfa023; }
    .light.max { background: #33c748; border-color: #24a934; }
    .light.close { background: radial-gradient(circle, #4d0000 0 4px, #ff5f57 5px); }
    .doc-title { display: flex; align-items: center; gap: 10px; margin: 0; padding-right: 6px; font: 400 25px Inter, sans-serif; color: #a6abb3; }
    .doc-title svg { width: 28px; height: 32px; }
    .account { display: flex; justify-content: flex-end; }
    .user { display: flex; align-items: center; gap: 12px; width: 239px; padding-left: 6px; background: #4e5a6d; border: solid #252b36; border-width: 0 2px 2px; font: 400 24px "Noto Sans", sans-serif; }
    .user svg.face { width: 30px; height: 34px; }
    .user svg.tri { width: 12px; height: 8px; margin-left: auto; margin-right: 8px; }
    .trial { display: flex; align-items: center; gap: 4px; width: 80px; padding-left: 9px; background: #1d98d5; font: 400 24px "Noto Sans", sans-serif; }
    .trial svg { width: 28px; height: 28px; }

    .toolbar { display: flex; gap: 130px; padding: 10px 0 18px 179px; background: #3a4554; border-bottom: 2px solid #222831; }
    .toolbar .group { display: flex; gap: 34px; }
    .toolbar button, .toolbar svg { width: 32px; height: 32px; }

    .body { display: grid; grid-template-columns: 368px minmax(0, 1fr); column-gap: 2px; flex: 1; }
    .palette { display: flex; flex-direction: column; background: #3c4453; border-left: 1px solid #4a5361; }
    .tabs { display: flex; gap: 2px; height: 46px; background: #222831; font-size: 24px; }
    .tabs button { flex: 159 1 0; background: #2f3340; color: #999ca3; margin-bottom: 2px; }
    .tabs button[aria-selected="true"] { background: #3c4453; color: #fff; margin-bottom: 0; padding-bottom: 2px; }
    .tabs .fold { flex: 0 0 46px; background: #3c4453; display: grid; place-items: center; }
    .fold svg { width: 14px; height: 12px; }

    section { border-bottom: 2px solid #222831; margin: 0 8px 0 7px; padding: 0 0 18px 6px; }
    section.plain { padding-top: 8px; }
    .head { display: flex; align-items: center; height: 48px; padding-right: 2px; }
    .head h2 { margin: 0; flex: 1; padding-bottom: 2px; font-size: 20px; font-weight: 400; }
    .head h2 button { display: flex; align-items: center; gap: 8px; margin-left: -5px; }
    .head .gear { width: 20px; height: 20px; }
    .head .gear svg { width: 20px; height: 20px; }
    .tri { width: 16px; height: 9px; }
    .rows { display: flex; flex-direction: column; gap: 16px; }
    .row { display: grid; grid-template-columns: repeat(8, 32px); grid-auto-rows: 32px; gap: 12px; }
    .tool { position: relative; }
    .tool svg { width: 100%; height: 100%; }
    .tool.big { grid-column: span 2; grid-row: span 2; }
    .tool.fly::after { content: ""; position: absolute; right: -6px; bottom: -6px; width: 8px; height: 8px; background: #a0a0a0; clip-path: polygon(100% 0, 100% 100%, 0 100%); }
    .tool.big.fly::after { right: -4px; bottom: -4px; }
    .glyph-x { font: 600 84px "Noto Sans", sans-serif; fill: #78c4ff; }
    .glyph-3 { font: 400 122px "Noto Sans", sans-serif; fill: #78c4ff; }
    .foot { display: flex; gap: 35px; margin-top: auto; padding: 4px 30px 0; height: 44px; align-items: center; }
    .foot svg { width: 22px; height: 22px; }
    .foot .list svg { width: 26px; height: 20px; }

    .work { display: flex; flex-direction: column; min-width: 0; }
    .docs { display: flex; gap: 2px; height: 44px; margin-bottom: 2px; }
    .docs > * { background: #3a4554; }
    .docs .sq { width: 46px; display: grid; place-items: center; }
    .docs .sq.add { width: 44px; }
    .docs .sq svg { width: 28px; height: 28px; }
    .docs .sq.add svg, .layouts .add svg { width: 22px; height: 22px; }
    .docs .doc { width: 256px; padding: 2px 0 0 6px; text-align: left; font-size: 22px; background: #4c5a71; }
    .docs .fill { flex: 1; }
    .docs .fold { width: 48px; display: grid; place-items: center; }

    .stage { display: flex; gap: 3px; flex: 1; padding-bottom: 3px; }
    .canvas { position: relative; flex: 1; overflow: hidden; background: #212830; }
    .scene { position: absolute; inset: 0; width: 100%; height: 100%; overflow: hidden; }
    .major { stroke: #2f3547; stroke-width: 2; }
    .minor { stroke: #252b35; stroke-width: 2; }
    .tower { stroke: #ecce72; stroke-width: 1.3; }
    .axis { font: 200 35px Inter, sans-serif; fill: #f4f4f4; }
    .views { position: absolute; top: 10px; left: 26px; display: flex; align-items: center; font: 600 23px/32px "Noto Sans", sans-serif; color: #a3a19e; }
    .views button { padding: 0 15px 0 12px; border-left: 3px solid #a3a19e; line-height: 26px; }
    .views button:first-child { border: 0; padding: 0 24px 0 0; font-weight: 400; }
    .nav { position: absolute; top: 80px; right: 22px; display: flex; flex-direction: column; align-items: center; gap: 45px; }
    .nav > svg { width: 245px; height: 170px; }
    .cube { font-family: "Liberation Sans Narrow", Roboto, sans-serif; font-weight: 700; fill: #4e545c; }
    .compass { font-family: Inter, sans-serif; font-weight: 600; fill: #b4b6b8; }
    .wcs { position: relative; display: flex; align-items: center; width: 101px; height: 24px; border-radius: 8px; background: #67747a; color: #212830; }
    .wcs select { width: 100%; padding-left: 8px; font: 400 21px/24px Inter, sans-serif; }
    .wcs svg { position: absolute; right: 9px; width: 19px; height: 11px; pointer-events: none; }
    .command { position: absolute; left: 572px; right: 576px; bottom: 1px; height: 46px; display: flex; gap: 2px; }
    .command > * { background: #3a4453; }
    .command .prompt { width: 76px; display: grid; place-items: center; }
    .command .prompt svg { width: 44px; height: 20px; }
    .command label { flex: 1; display: flex; align-items: center; padding: 0 9px 0 8px; }
    .command input { flex: 1; font: italic 400 23px "Open Sans", sans-serif; }
    .command input::placeholder { color: #a9abac; opacity: 1; }
    .command label svg { width: 12px; height: 8px; }

    .rail { display: flex; flex-direction: column; gap: 3px; width: 45px; }
    .rail button { flex: 1; display: grid; place-items: center; padding-right: 5px; background: #2c3140; border-right: 1px solid #444a57; color: #dcdde0; }
    .rail span { writing-mode: vertical-rl; transform: rotate(180deg); font: 400 24px/30px Inter, sans-serif; }

    .status { display: flex; height: 44px; gap: 2px; }
    .status > * { background: #3a4453; }
    .layouts { display: flex; gap: 2px; background: #222831; font: 400 21px "Noto Sans", sans-serif; }
    .layouts button { width: 116px; background: #3a4453; color: #99a0a8; }
    .layouts button.model { width: 118px; padding-right: 4px; background: #4c5a6f; color: #fff; font-weight: 700; }
    .layouts button.add { width: 44px; display: grid; place-items: center; }
    .status .gap { flex: 1; }
    .tray { display: flex; align-items: center; gap: 4px; padding-right: 10px; color: #d9d9d9; }
    .coords { padding: 0 0 0 13px; font: 400 24px "Noto Sans", sans-serif; color: #6b7078; width: 358px; white-space: nowrap; }
    .tray button { width: 40px; height: 40px; }
    .tray button svg { width: 40px; height: 40px; }
    .tray button.on { background: #5b8ab8; color: #fff; }
    .scale { display: flex; align-items: center; width: 60px; position: relative; }
    .scale select { width: 60px; font: 400 22px "Noto Sans", sans-serif; }
    .scale svg { position: absolute; right: 10px; width: 12px; height: 9px; pointer-events: none; }
  `;

  private toggle(title: string) {
    const next = new Set(this.closed);
    next.has(title) ? next.delete(title) : next.add(title);
    this.closed = next;
  }

  private tool(g: Glyph) {
    return html`<button class="tool ${g.big ? "big" : ""} ${g.fly ? "fly" : ""}" aria-label=${g.label} title=${g.label}>${draw(g.box, g.art)}</button>`;
  }

  private rows(rows: Glyph[][]) {
    return html`<div class="rows">${rows.map((r) => html`<div class="row">${r.map((g) => this.tool(g))}</div>`)}</div>`;
  }

  private palette() {
    return html`<aside class="palette">
      <div class="tabs" role="tablist">
        ${["Drafting", "Modeling"].map((t) => html`<button role="tab" aria-selected=${this.tab === t ? "true" : "false"} @click=${() => (this.tab = t)}>${t}</button>`)}
        <button class="fold" aria-label="Collapse tool sets">${draw("0 0 14 12", svg`<path d="M6 1L1 6L6 11M13 1L8 6L13 11" stroke="#999ca3" stroke-width="1.5" />`)}</button>
      </div>
      <section class="plain">${this.rows(SURFACE)}</section>
      ${SECTIONS.map((s) => html`<section>
        <div class="head">
          <h2><button aria-expanded=${this.closed.has(s.title) ? "false" : "true"} @click=${() => this.toggle(s.title)}>
            <svg class="tri" viewBox="0 0 16 9" aria-hidden="true"><path d="M0 0H16L8 9Z" fill="#f4f4f4" /></svg>${s.title}</button></h2>
          <button class="gear" aria-label="${s.title} settings">${draw("2 2 20 20", GEAR)}</button>
        </div>
        ${this.closed.has(s.title) ? nothing : this.rows(s.rows)}
      </section>`)}
      <div class="foot">
        <button aria-label="Add panel">${draw("0 0 22 22", PLUS)}</button>
        <button class="list" aria-label="Manage panels">${draw("0 0 26 20", svg`<path d="M5 1H26M10 7H26M5 19H26" stroke="#d9d9d9" stroke-width="2" /><path d="M0 11H18V15H0Z" fill="#d9d9d9" /><path d="M20 14L23 10L26 14Z" fill="#d9d9d9" />`)}</button>
      </div>
    </aside>`;
  }

  private scene() {
    return html`<svg class="scene" viewBox="370 150 2142 1217" preserveAspectRatio="xMidYMid slice" fill="none" role="img" aria-label="Wall wireframe">
      ${svg`${GRID}
      <g class="tower">${TOWER}</g>
      <g stroke="#e6e6e6" stroke-width="1.5">
        <path d="M1300.5 321V1074M1298 320L1376 334.5M1298 1074.5L1376 1087" />
        <path d="M1376.5 1088L1478.5 1008.5L1522.5 1016.5L1420.5 1096" stroke="#fff3d0" stroke-width="2" />
        <path d="M1376 1088L1353 1106L1397 1114L1421 1094L1461 1102L1564 1022L1523 1016" />
      </g>
      <path d="M1301 695H1306V704H1302L1301 702ZM1372 1107L1380 1108L1377 1110ZM1504 1062L1512 1061L1508 1064ZM1352 1105H1355V1107H1352ZM1395 1113H1398V1115H1395ZM1460 1101H1463V1103H1460ZM1561 1021H1565V1024H1561Z" fill="#fff" />
      <g stroke="#f0f0f0" stroke-width="1.5">
        <path d="M438.5 1244V1338L392.5 1306M438.5 1338L528.5 1322" />
        <path d="M426 1336L440 1334L453 1338L437 1342.5Z" />
      </g>
      <text x="448" y="1242" class="axis">Z</text><text x="396" y="1297" class="axis">Y</text><text x="538" y="1320" class="axis">X</text>
      <path d="M1968.5 983V1065M1968.5 1078V1116" stroke="#5b6f9c" stroke-width="1.5" />
      <path d="M1924 1041L1962 1067M1975 1075L1991 1085" stroke="#5fbf6c" stroke-width="1.5" />
      <path d="M1927 1077L1962 1072.5M1975 1070L2053 1057" stroke="#c45050" stroke-width="1.5" />
      <rect x="1962.5" y="1065.5" width="12" height="12" stroke="#e6e6e6" stroke-width="1.5" />
      <rect x="2037" y="1290" width="2" height="2" fill="#7d7f83" />`}
    </svg>`;
  }

  private nav() {
    return html`<div class="nav">
      <svg viewBox="135 150 735 510" role="img" aria-label="View cube">
        <defs>
          <linearGradient id="f" x1="0" y1="0" x2="0" y2="1"><stop offset="0" stop-color="#b4b4b5" /><stop offset="1" stop-color="#979798" /></linearGradient>
          <linearGradient id="l" x1="0" y1="0" x2="0" y2="1"><stop offset="0" stop-color="#b0b1b2" /><stop offset="1" stop-color="#9a9b9c" /></linearGradient>
          <radialGradient id="s"><stop offset="0" stop-color="#4a5056" stop-opacity="0.8" /><stop offset="1" stop-color="#4a5056" stop-opacity="0" /></radialGradient>
        </defs>
        <path fill="#4a5057" fill-rule="evenodd" d="M169 493A338 145 0 0 1 845 493A338 145 0 0 1 169 493ZM257 480A253 110 0 0 0 763 480A253 110 0 0 0 257 480Z" />
        <ellipse cx="510" cy="480" rx="200" ry="70" fill="url(#s)" />
        <path d="M345 203L556 172L679 234L449 271Z" fill="#b3b4b6" />
        <path d="M449 271L679 234L670 465L453 516Z" fill="url(#f)" />
        <path d="M345 203L449 271L453 516L352 424Z" fill="url(#l)" />
        <path d="M345 203L449 271L679 234M449 271L453 516" fill="none" stroke="#3c4148" stroke-width="3" stroke-dasharray="30 5" />
        <path d="M428 258L462 252L494 264V312L452 318L430 304Z" fill="#9ba3b0" opacity="0.7" />
        <text class="cube" font-size="54" transform="translate(486 416) skewY(-11)">FRONT</text>
        <text class="cube" font-size="27" transform="translate(371 360) skewY(34)">LEFT</text>
        <text class="cube" font-size="42" transform="translate(470 234) rotate(-9) skewX(30)">TOP</text>
        <text class="compass" font-size="82" transform="translate(186 566) rotate(-16) skewX(30)">W</text>
        <text class="compass" font-size="84" transform="translate(642 624) rotate(10) skewX(25)">S</text>
        <text class="compass" font-size="66" transform="translate(744 426) rotate(-6) skewX(42)">E</text>
        <path d="M340 354L348 350V360Z" fill="#d0d0d0" />
      </svg>
      <div class="wcs">
        <select aria-label="Coordinate system"><option>WCS</option></select>
        <svg viewBox="0 0 19 11" aria-hidden="true"><path d="M1 1H18L9.5 10Z" fill="#93a4a9" stroke="#212830" stroke-width="1.5" /></svg>
      </div>
    </div>`;
  }

  render() {
    return html`<div class="window">
      <header class="titlebar">
        <div class="lights">
          <button class="light close" aria-label="Close"></button><button class="light min" aria-label="Minimize"></button><button class="light max" aria-label="Zoom"></button>
        </div>
        <h1 class="doc-title">${draw("0 0 28 32", svg`<path d="M0 0H20L28 8V32H0Z" fill="#35557c" /><path d="M20 0L28 8H20Z" fill="#5b7796" /><path d="M0 18H9L28 28V32H0Z" fill="#937d45" /><path d="M0 11H28M9 0V18" stroke="#93a3b3" stroke-width="2" /><path d="M7 9H11V13H7Z" fill="#35557c" stroke="#93a3b3" stroke-width="1.5" />`)}wall.dwg</h1>
        <div class="account">
          <button class="user">
            <svg class="face" viewBox="0 0 30 34" aria-hidden="true"><path d="M1 33Q2 25 11 23L15 21L19 23Q28 25 29 33Z" fill="#5277cf" stroke="#000" stroke-width="1.8" /><ellipse cx="15" cy="12" rx="7" ry="10" fill="#6e94e6" stroke="#000" stroke-width="1.8" /></svg>
            safwathanaa
            <svg class="tri" viewBox="0 0 12 8" aria-hidden="true"><path d="M0 0H12L6 8Z" fill="#d0d3d8" /></svg>
          </button>
          <button class="trial" aria-label="30 days left">${draw("0 0 28 28", svg`<circle cx="14" cy="14" r="14" fill="#fff" /><path d="M14 4V14L19 20" stroke="#1d98d5" stroke-width="3" />`)}30</button>
        </div>
      </header>
      <nav class="toolbar" aria-label="Main toolbar">
        ${TOOLBAR.map((g) => html`<div class="group">${g.map((i) => html`<button aria-label=${i.label} title=${i.label}>${draw(i.box, i.art)}</button>`)}</div>`)}
      </nav>
      <div class="body">
        ${this.palette()}
        <main class="work">
          <div class="docs">
            <button class="sq" aria-label="Start">${draw("0 0 28 28", svg`<path d="M0 0H14V14H0Z" fill="#8cccfb" /><path d="M16 2H28V14H16ZM2 16H14V28H2ZM16 16H28V28H16Z" fill="#d9d9d9" />`)}</button>
            <button class="sq add" aria-label="New drawing">${draw("0 0 22 22", PLUS)}</button>
            <button class="doc">wall*</button>
            <div class="fill"></div>
            <button class="fold" aria-label="Collapse side panels">${draw("0 0 14 12", svg`<path d="M6 1L1 6L6 11M13 1L8 6L13 11" stroke="#999ca3" stroke-width="1.5" />`)}</button>
          </div>
          <div class="stage">
            <div class="canvas">
              ${this.scene()}
              <div class="views"><button aria-label="Viewport controls">+</button><button>Custom View</button><button>2D Wireframe</button></div>
              ${this.nav()}
              <div class="command">
                <button class="prompt" aria-label="Command history">${draw("0 0 44 20", svg`<path d="M1 1L9 6L1 11M14 18H27" stroke="#bdbfc2" stroke-width="2" /><path d="M31 5H44L37.5 12Z" fill="#bdbfc2" />`)}</button>
                <label><input type="text" placeholder="Type a command" aria-label="Command" />${draw("0 0 12 8", svg`<path d="M0 8H12L6 0Z" fill="#a9abac" />`)}</label>
              </div>
            </div>
            <div class="rail">
              ${["Layers and Properties", "Reference Manager", "Blocks"].map((t) => html`<button><span>${t}</span></button>`)}
            </div>
          </div>
          <footer class="status">
            <div class="layouts">
              <button class="model">Model</button>
              <button class="add" aria-label="New layout">${draw("0 0 22 22", PLUS)}</button>
              <button>Layout1</button><button>Layout2</button>
            </div>
            <div class="gap"></div>
            <div class="tray">
              <span class="coords">2658.2642, 2153.3354, 0.0000</span>
              ${STATUS.map((s) => html`<button class=${s.on ? "on" : ""} aria-pressed=${s.on ? "true" : "false"} aria-label=${s.label}>${draw(B40, s.art)}</button>`)}
              <div class="scale"><select aria-label="Scale"><option>1:1</option></select><svg viewBox="0 0 12 9" aria-hidden="true"><path d="M0 0H12L6 9Z" fill="#d9d9d9" /></svg></div>
              <button aria-label="Workspace">${draw(B40, svg`<path d="M5 5H17V17H5Z" stroke="currentColor" stroke-width="2" /><circle cx="29" cy="17" r="6" stroke="currentColor" stroke-width="2" /><path d="M17 23L23 35H11Z" stroke="currentColor" stroke-width="2" />`)}</button>
              <button aria-label="Settings">${draw("-3 -3 30 30", svg`<circle cx="12" cy="12" r="9" stroke="currentColor" stroke-width="4" stroke-dasharray="3.53 3.53" stroke-dashoffset="1.76" /><circle cx="12" cy="12" r="6" stroke="currentColor" stroke-width="5" />`)}</button>
            </div>
          </footer>
        </main>
      </div>
    </div>`;
  }
}
